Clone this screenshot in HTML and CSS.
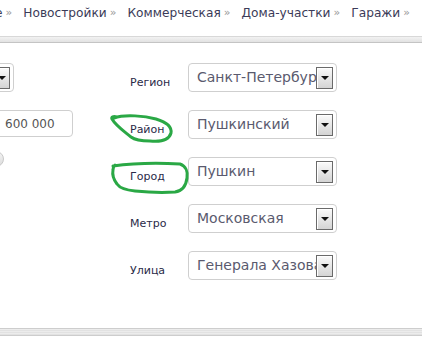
FILE: index.html
```html
<!DOCTYPE html>
<html lang="ru">
<head>
  <meta charset="UTF-8">
  <title>Поиск недвижимости</title>
  <link rel="stylesheet" href="styles.css">
</head>
<body>
  <nav class="crumbs">
    <span class="crumb"><a href="#">Вторичное</a><span class="sep">»</span></span>
    <span class="crumb"><a href="#">Новостройки</a><span class="sep">»</span></span>
    <span class="crumb"><a href="#">Коммерческая</a><span class="sep">»</span></span>
    <span class="crumb"><a href="#">Дома-участки</a><span class="sep">»</span></span>
    <span class="crumb"><a href="#">Гаражи</a><span class="sep">»</span></span>
  </nav>
  <div class="rule"></div>

  <main class="panel">
    <div class="side">
      <div class="combo combo-short"><span class="combo-btn"></span></div>
      <input class="price" type="text" value="600 000">
      <span class="knob"></span>
    </div>

    <div class="fields">
      <div class="row">
        <label>Регион</label>
        <div class="combo">Санкт-Петербург<span class="combo-btn"></span></div>
      </div>
      <div class="row">
        <label>Район</label>
        <div class="combo">Пушкинский<span class="combo-btn"></span></div>
      </div>
      <div class="row">
        <label>Город</label>
        <div class="combo">Пушкин<span class="combo-btn"></span></div>
      </div>
      <div class="row">
        <label>Метро</label>
        <div class="combo">Московская<span class="combo-btn"></span></div>
      </div>
      <div class="row">
        <label>Улица</label>
        <div class="combo">Генерала Хазова<span class="combo-btn"></span></div>
      </div>
    </div>
  </main>
  <div class="rule rule-bottom"></div>

  <!-- пометки маркером поверх формы -->
  <svg class="marks" viewBox="0 0 422 339">
    <path d="M114,118 C125,114 145,116 156,119 C166,122 172,127 171,133 C169,140 160,142 150,141 C141,141 135,140 131,137 C125,132 116,126 112,119 C111,117 113,116 117,117"/>
    <path d="M113,166 C135,163 160,163 180,164 C186,166 188,172 187,178 C186,186 182,191 175,192 C160,193 145,192 135,191 C125,190 119,187 117,184 C114,180 112,175 113,170 C113,168 113,167 115,165"/>
  </svg>
</body>
</html>
```

FILE: styles.css
```css
body { margin: 0; width: 422px; height: 339px; overflow: hidden; position: relative; background: #fff; font-family: "DejaVu Sans", Verdana, sans-serif; }

.crumbs { display: flex; justify-content: flex-end; gap: 11px; height: 36px; box-sizing: border-box; padding: 3px 12px 0 0; white-space: nowrap; font-size: 12.2px; line-height: 20px; color: #3b3b58; overflow: hidden; }
.crumb { display: flex; gap: 3px; flex: none; }
.crumb a { color: inherit; text-decoration: none; }
.sep { color: #999; font-size: 11px; }

.rule { height: 7px; box-sizing: border-box; border-top: 1px solid #d8d8d8; border-bottom: 1px solid #c4c4c4; background: linear-gradient(#f2f2f2, #e2e2e2); }
.rule-bottom { height: 8px; border-top-color: #cdcdcd; border-bottom-color: #cdcdcd; background: repeating-linear-gradient(#ececec 0 1px, #e2e2e2 1px 2px); }

.panel { display: flex; height: 285px; box-sizing: border-box; padding-top: 20px; }
.side { width: 120px; margin-left: -47px; flex: none; display: flex; flex-direction: column; align-items: flex-start; }
.fields { margin-left: 57px; display: flex; flex-direction: column; gap: 18px; }
.row { display: flex; }
.row label { width: 58px; font-size: 11px; line-height: 13px; padding-top: 13px; color: #2a2a48; }

.combo { position: relative; width: 149px; height: 29px; box-sizing: border-box; border: 1px solid #cfcfcf; border-radius: 4px; padding-left: 8px; font-size: 14px; line-height: 27px; color: #5a5a6e; white-space: nowrap; overflow: hidden; }
.combo-short { width: 61px; }
.combo-btn { position: absolute; top: 3px; right: 3px; width: 17px; height: 22px; box-sizing: border-box; border: 1px solid #6a6a6a; background: linear-gradient(#fafafa, #d4d4d4); box-shadow: inset 1px 1px 0 #fff; }
.combo-btn::after { content: ""; position: absolute; left: 50%; top: 8px; margin-left: -4px; border-left: 4px solid transparent; border-right: 4px solid transparent; border-top: 4px solid #111; }

.price { margin-top: 18px; width: 120px; height: 27px; box-sizing: border-box; border: 1px solid #cfcfcf; border-radius: 4px; padding: 0 0 0 51px; font: 12px "DejaVu Sans", Verdana, sans-serif; color: #555; }
.knob { margin: 14px 0 0 35px; width: 16px; height: 16px; box-sizing: border-box; border-radius: 50%; border: 1px solid #c8c8c8; background: linear-gradient(#f4f4f4, #dcdcdc); }

.marks { position: absolute; top: 0; left: 0; width: 422px; height: 339px; pointer-events: none; fill: none; stroke: #2aa845; stroke-width: 3; stroke-linecap: round; stroke-linejoin: round; }
```
